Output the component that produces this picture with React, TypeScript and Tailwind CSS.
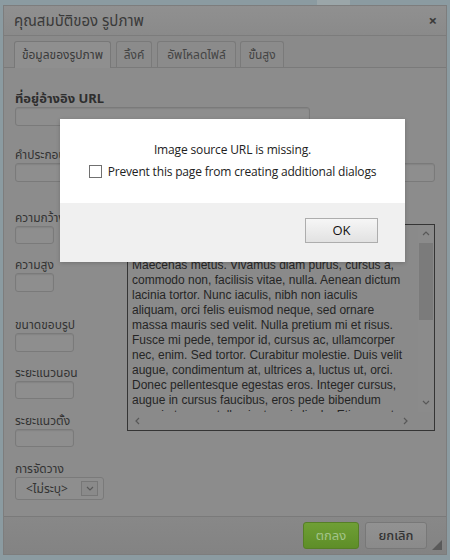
import React from "react";

const previewLines = [
  "Lorem ipsum dolor sit amet, consectetuer",
  "adipiscing elit. Maecenas feugiat consequat diam.",
  "Maecenas metus. Vivamus diam purus, cursus a,",
  "commodo non, facilisis vitae, nulla. Aenean dictum",
  "lacinia tortor. Nunc iaculis, nibh non iaculis",
  "aliquam, orci felis euismod neque, sed ornare",
  "massa mauris sed velit. Nulla pretium mi et risus.",
  "Fusce mi pede, tempor id, cursus ac, ullamcorper",
  "nec, enim. Sed tortor. Curabitur molestie. Duis velit",
  "augue, condimentum at, ultrices a, luctus ut, orci.",
  "Donec pellentesque egestas eros. Integer cursus,",
  "augue in cursus faucibus, eros pede bibendum",
  "sem, in tempus tellus justo quis ligula. Etiam eget",
];

function Field({ w, h = "h-[19px]" }: { w: string; h?: string }) {
  return (
    <div
      className={`${w} ${h} border border-[#7a7a7a] rounded-[3px] bg-[#8e8e8e] shadow-[inset_0_1px_1px_rgba(0,0,0,0.08)]`}
    />
  );
}

function Chevron({ dir }: { dir: "up" | "down" | "left" | "right" }) {
  const pts =
    dir === "up"
      ? "1,5 4,2 7,5"
      : dir === "down"
      ? "1,2 4,5 7,2"
      : dir === "left"
      ? "5,1 2,4 5,7"
      : "2,1 5,4 2,7";
  return (
    <svg width="8" height="8" viewBox="0 0 8 8">
      <polyline points={pts} fill="none" stroke="#585858" strokeWidth="1.2" />
    </svg>
  );
}

export default function App() {
  const thai = "font-['Noto_Sans','Noto_Sans_Thai','DejaVu_Sans',sans-serif]";
  return (
    <div className={`w-[450px] h-[560px] bg-[#8b9ba1] relative overflow-hidden ${thai}`}>
      {/* top strip */}
      <div className="h-[5px] flex">
        <div className="ml-[317px] w-[33px] h-[5px] bg-[#9ba6a9]" />
      </div>

      <div className="pl-[3px] flex">
        {/* dialog */}
        <div className="w-[444px] h-[550px] bg-[#8c8c8c] border border-[#7d7d7d] flex flex-col">
          {/* title */}
          <div className="h-[30px] shrink-0 border-b border-[#7c7c7c] bg-gradient-to-b from-[#909090] to-[#8a8a8a] flex items-center justify-between pl-[10px] pr-[9px]">
            <span className="text-[15px] text-[#3a3a3a] leading-none">คุณสมบัติของ รูปภาพ</span>
            <span className="text-[15px] font-bold text-[#3a3a3a] leading-none">×</span>
          </div>

          {/* tabs */}
          <div className="h-[32px] shrink-0 border-b border-[#7a7a7a] bg-[#8a8a8a] flex items-end pl-[10px]">
            <div className="w-[97px] h-[27px] -mb-px bg-[#8f8f8f] border border-b-0 border-[#787878] rounded-t-[3px] flex items-center justify-center text-[12px] text-[#3a3a3a]">
              ข้อมูลของรูปภาพ
            </div>
            <div className="ml-[5px] w-[36px] h-[26px] bg-[#8b8b8b] border border-b-0 border-[#7a7a7a] rounded-t-[3px] flex items-center justify-center text-[12px] text-[#444]">
              ลิ้งค์
            </div>
            <div className="ml-[5px] w-[79px] h-[26px] bg-[#8b8b8b] border border-b-0 border-[#7a7a7a] rounded-t-[3px] flex items-center justify-center text-[12px] text-[#444]">
              อัพโหลดไฟล์
            </div>
            <div className="ml-[4px] w-[44px] h-[26px] bg-[#8b8b8b] border border-b-0 border-[#7a7a7a] rounded-t-[3px] flex items-center justify-center text-[12px] text-[#444]">
              ขั้นสูง
            </div>
          </div>

          {/* content */}
          <div className="flex-1 px-[11px] flex flex-col">
            <div className="mt-[22px] h-[17px] leading-[17px] text-[13px] font-bold text-[#2e2e2e]">ที่อยู่อ้างอิง URL</div>
            <Field w="w-[295px]" />

            <div className="mt-[21px] h-[16px] leading-[16px] text-[12px] text-[#333]">คำประกอบรูปภาพ</div>
            <Field w="w-[420px]" />

            <div className="flex items-start">
              <div className="w-[112px] flex flex-col">
                <div className="mt-[28px] h-[16px] leading-[16px] text-[12px] text-[#333]">ความกว้าง</div>
                <Field w="w-[39px]" h="h-[18px]" />
                <div className="mt-[13px] h-[16px] leading-[16px] text-[12px] text-[#333]">ความสูง</div>
                <Field w="w-[39px]" />
                <div className="mt-[25px] h-[16px] leading-[16px] text-[12px] text-[#333]">ขนาดขอบรูป</div>
                <Field w="w-[59px]" />
                <div className="mt-[13px] h-[16px] leading-[16px] text-[12px] text-[#333]">ระยะแนวนอน</div>
                <Field w="w-[59px]" h="h-[18px]" />
                <div className="mt-[14px] h-[16px] leading-[16px] text-[12px] text-[#333]">ระยะแนวตั้ง</div>
                <Field w="w-[59px]" h="h-[18px]" />
                <div className="mt-[14px] h-[16px] leading-[16px] text-[12px] text-[#333]">การจัดวาง</div>
                <div className="w-[89px] h-[23px] border border-[#7a7a7a] rounded-[3px] bg-[#8e8e8e] flex items-center">
                  <span className="ml-[10px] w-[55px] text-[12px] text-[#333]">&lt;ไม่ระบุ&gt;</span>
                  <div className="w-[17px] h-[15px] border border-[#777] bg-[#8a8a8a] flex items-center justify-center">
                    <Chevron dir="down" />
                  </div>
                </div>
              </div>

              {/* preview */}
              <div className="mt-[42px] w-[308px] h-[207px] border border-[#353535] bg-[#8a8a8a] flex flex-col">
                <div className="flex flex-1 min-h-0">
                  <div className="flex-1 overflow-hidden pl-[4px] pt-[3px] font-['Liberation_Sans',Arial,sans-serif] text-[12px] leading-[15px] text-[#252525] whitespace-nowrap">
                    {previewLines.map((l) => (
                      <div key={l}>{l}</div>
                    ))}
                  </div>
                  <div className="w-[16px] flex flex-col items-center bg-[#8b8b8b]">
                    <div className="h-[18px] flex items-center justify-center"><Chevron dir="up" /></div>
                    <div className="w-[14px] h-[77px] bg-[#7b7b7b]" />
                    <div className="flex-1" />
                    <div className="h-[18px] flex items-center justify-center"><Chevron dir="down" /></div>
                  </div>
                </div>
                <div className="h-[18px] shrink-0 bg-[#8a8a8a] flex items-center justify-between pl-[6px] pr-[24px]">
                  <Chevron dir="left" />
                  <Chevron dir="right" />
                </div>
              </div>
            </div>
          </div>

          {/* footer */}
          <div className="h-[38px] shrink-0 border-t border-[#7a7a7a] bg-gradient-to-b from-[#888] to-[#838383] relative flex justify-end items-start pt-[5px] pr-[19px] gap-[6px]">
            <div className="w-[56px] h-[27px] rounded-[3px] border border-[#567f26] bg-gradient-to-b from-[#6f9f35] to-[#5e8e28] flex items-center justify-center text-[13px] text-[#a3c48a]">
              ตกลง
            </div>
            <div className="w-[62px] h-[27px] rounded-[3px] border border-[#787878] bg-gradient-to-b from-[#929292] to-[#8a8a8a] flex items-center justify-center text-[13px] font-medium text-[#333]">
              ยกเลิก
            </div>
            <svg className="absolute right-[4px] bottom-[4px]" width="10" height="10" viewBox="0 0 10 10">
              <polygon points="10,0 10,10 0,10" fill="#5a5a5a" />
            </svg>
          </div>
        </div>
      </div>

      {/* alert */}
      <div className="absolute left-[60px] top-[119px] w-[345px] h-[143px] bg-white shadow-[0_1px_4px_rgba(0,0,0,0.2)] flex flex-col font-['Open_Sans',sans-serif]">
        <div className="h-[84px] flex flex-col items-center pt-[22px]">
          <div className="text-[12px] leading-[17px] tracking-[-0.15px] text-[#222]">Image source URL is missing.</div>
          <div className="mt-[5px] flex items-center gap-[6px]">
            <div className="w-[13px] h-[13px] border border-[#707070] bg-white" />
            <span className="text-[12px] leading-[17px] tracking-[-0.18px] text-[#222]">Prevent this page from creating additional dialogs</span>
          </div>
        </div>
        <div className="flex-1 bg-[#f0f0f0] flex justify-end items-start pt-[15px] pr-[27px]">
          <div className="w-[73px] h-[25px] border border-[#adadad] bg-gradient-to-b from-[#f6f6f6] to-[#e2e2e2] flex items-center justify-center text-[13px] text-[#111]">
            OK
          </div>
        </div>
      </div>
    </div>
  );
}
